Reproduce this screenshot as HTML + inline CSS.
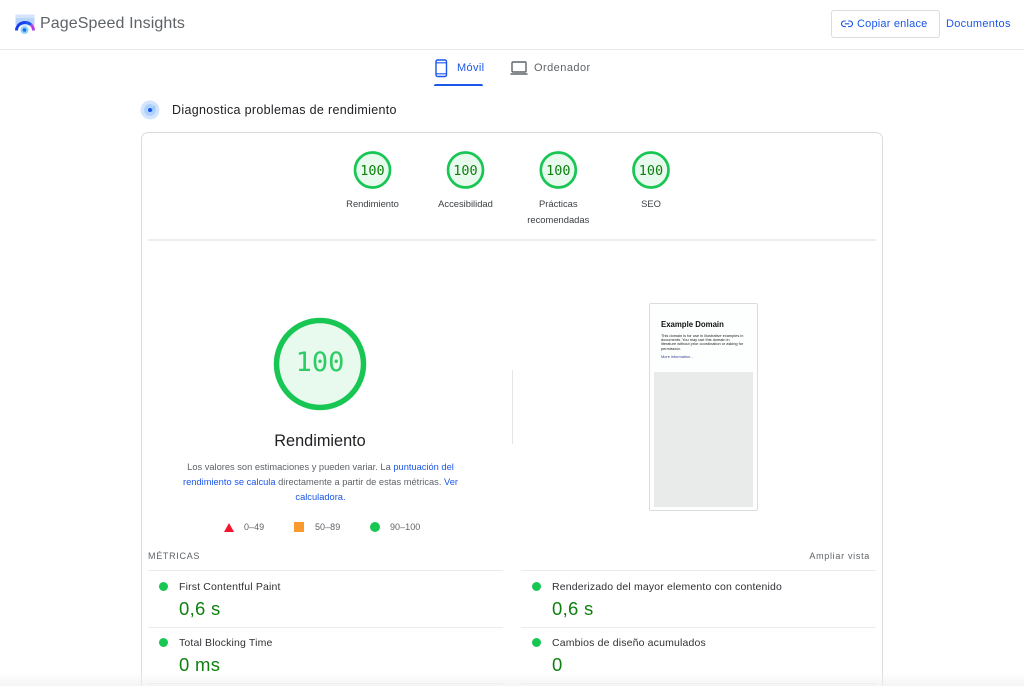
<!DOCTYPE html>
<html lang="es">
<head>
<meta charset="utf-8">
<title>PageSpeed Insights</title>
<style>
html,body{margin:0;padding:0;background:#fff;width:1024px;height:686px;overflow:hidden}
#root{position:relative;width:1024px;height:686px;overflow:hidden;font-family:"Liberation Sans",sans-serif;color:#202124}
.a{position:absolute;white-space:nowrap}
.c{text-align:center;transform:translateX(-50%)}
.line{position:absolute;height:1px;background:#ebebeb}
.mono{font-family:"DejaVu Sans Mono",monospace}
.lab{font-size:9.4px;color:#3c4043;line-height:15.5px}
.leg{font-size:9px;color:#5f6368;letter-spacing:.05px}
.mname{font-size:10.5px;color:#303134;letter-spacing:.16px}
.mval{font-size:18.5px;color:#0f800f;letter-spacing:.3px}
.dot{position:absolute;width:9px;height:9px;border-radius:50%;background:#18c653}
a{color:#1a56e8;text-decoration:none}
</style>
</head>
<body>
<div id="root">
<div class="line" style="left:0;top:49px;width:1024px;height:1px;background:#e8e8e8"></div>

<svg class="a" style="left:14px;top:13px" width="22" height="22" viewBox="0 0 22 22">
<rect x="1.5" y="1.5" width="19" height="11" rx="1" fill="#b8d4fb"/>
<rect x="1.5" y="1.5" width="19" height="3.5" fill="#d4e4fc"/>
<path d="M2.500 17.500a8.500 8 0 0 1 8.500-8" fill="none" stroke="#1a3df0" stroke-width="3"/>
<path d="M11 9.500a8.500 8 0 0 1 6 2.300" fill="none" stroke="#1a55ee" stroke-width="3"/>
<path d="M17 11.800a8.500 8 0 0 1 2.500 5.700" fill="none" stroke="#b23fe8" stroke-width="3"/>
<circle cx="10.500" cy="17" r="4" fill="#8fd0fb"/>
<circle cx="10.500" cy="17" r="1.800" fill="#1a6af0"/>
</svg>
<div class="a" style="left:40px;top:14px;font-size:16px;color:#5f6368;letter-spacing:.1px;line-height:20px">PageSpeed Insights</div>

<div class="a" style="left:831px;top:10px;width:107px;height:26px;border:1px solid #dadce0;border-radius:3px"></div>
<svg class="a" style="left:841px;top:19px" width="12" height="10" viewBox="0 0 12 10">
<path d="M4.800 2H3.300a2.700 2.700 0 0 0 0 5.600h1.500M7.200 2h1.500a2.700 2.700 0 0 1 0 5.600H7.200M3.800 4.800h4.400" fill="none" stroke="#1a56e8" stroke-width="1.100"/>
</svg>
<a class="a" style="left:857px;top:17px;font-size:11px;line-height:14px;letter-spacing:.2px">Copiar enlace</a>
<a class="a" style="left:946px;top:17px;font-size:11px;line-height:14px;letter-spacing:.3px">Documentos</a>

<svg class="a" style="left:434px;top:59px" width="15" height="19" viewBox="0 0 15 19">
<rect x="2" y="1" width="10.500" height="16.500" rx="1.500" fill="none" stroke="#1a56e8" stroke-width="1.400"/>
<path d="M2 3.800h10.500M2 14.800h10.500" stroke="#1a56e8" stroke-width="1.200"/>
</svg>
<a class="a" style="left:457px;top:61px;font-size:11px;line-height:14px;letter-spacing:.35px">Móvil</a>
<div class="a" style="left:434px;top:84px;width:49px;height:2px;background:#1a56e8;border-radius:2px 2px 0 0"></div>
<svg class="a" style="left:510px;top:60px" width="18" height="16" viewBox="0 0 18 16">
<rect x="2" y="2" width="14" height="10" rx="1" fill="none" stroke="#5f6368" stroke-width="1.400"/>
<path d="M.5 14h17" stroke="#5f6368" stroke-width="1.400"/>
</svg>
<div class="a" style="left:534px;top:61px;font-size:11px;line-height:14px;letter-spacing:.45px;color:#5f6368">Ordenador</div>

<svg class="a" style="left:140px;top:100px" width="20" height="20" viewBox="0 0 20 20">
<circle cx="10" cy="10" r="9.500" fill="#d3e5fd"/>
<circle cx="10" cy="10" r="6" fill="#aed2fb"/>
<path d="M10 10l6-5-3.500 7z" fill="#8ec2fa"/>
<circle cx="10" cy="10" r="2" fill="#1a56e8"/>
</svg>
<div class="a" style="left:172px;top:102px;font-size:12.5px;line-height:17px;color:#202124;letter-spacing:.32px">Diagnostica problemas de rendimiento</div>

<div class="a" style="left:141px;top:132px;width:740px;height:553px;border:1px solid #dadce0;border-bottom:0;border-radius:7px 7px 0 0"></div>

<svg class="a" style="left:340px;top:140px" width="340" height="60" viewBox="340 140 340 60">
<g fill="#e8f9ee" stroke="#18c653" stroke-width="2.700">
<circle cx="372.500" cy="170" r="17.500"/>
<circle cx="465.500" cy="170" r="17.500"/>
<circle cx="558.300" cy="170" r="17.500"/>
<circle cx="651" cy="170" r="17.500"/>
</g>
</svg>
<div class="a c mono" style="left:372.500px;top:162px;font-size:13.500px;line-height:18px;color:#0f800f">100</div>
<div class="a c mono" style="left:465.500px;top:162px;font-size:13.500px;line-height:18px;color:#0f800f">100</div>
<div class="a c mono" style="left:558.300px;top:162px;font-size:13.500px;line-height:18px;color:#0f800f">100</div>
<div class="a c mono" style="left:651px;top:162px;font-size:13.500px;line-height:18px;color:#0f800f">100</div>

<div class="a c lab" style="left:372.500px;top:196px">Rendimiento</div>
<div class="a c lab" style="left:465.500px;top:196px">Accesibilidad</div>
<div class="a c lab" style="left:558.300px;top:196px">Prácticas<br>recomendadas</div>
<div class="a c lab" style="left:651px;top:196px">SEO</div>

<div class="line" style="left:148px;top:239px;width:728px;height:2px;background:#eeeeee"></div>

<svg class="a" style="left:270px;top:314px" width="100" height="100" viewBox="0 0 100 100">
<circle cx="50" cy="50" r="43.500" fill="#e8f9ee" stroke="#18c653" stroke-width="5.500"/>
</svg>
<div class="a c mono" style="left:320px;top:346px;font-size:27px;line-height:34px;color:#2dcc64">100</div>
<div class="a c" style="left:320px;top:431px;font-size:16.300px;line-height:20px;color:#202124">Rendimiento</div>
<div class="a c" style="left:320.500px;top:460px;font-size:9.300px;line-height:15px;color:#5f6368;text-align:center">Los valores son estimaciones y pueden variar. La <a>puntuación del</a><br><a>rendimiento se calcula</a> directamente a partir de estas métricas. <a>Ver</a><br><a>calculadora.</a></div>

<svg class="a" style="left:224px;top:523px" width="10" height="9" viewBox="0 0 10 9"><path d="M5 0l5 9H0z" fill="#f5142b"/></svg>
<div class="a leg" style="left:244px;top:522px;line-height:11px">0–49</div>
<div class="a" style="left:294px;top:522px;width:10px;height:10px;background:#fb9a2c"></div>
<div class="a leg" style="left:315px;top:522px;line-height:11px">50–89</div>
<div class="a" style="left:370px;top:522px;width:10px;height:10px;border-radius:50%;background:#18c653"></div>
<div class="a leg" style="left:390px;top:522px;line-height:11px">90–100</div>

<div class="a" style="left:512px;top:370px;width:1px;height:74px;background:#e4e6e6"></div>

<div class="a" style="left:649px;top:303px;width:107px;height:206px;border:1px solid #dadce0;border-radius:2px;background:#fdfefe"></div>
<div class="a" style="left:654px;top:372px;width:99px;height:135px;background:#e9ebea"></div>
<div class="a" style="left:661px;top:319.500px;font-size:7.800px;line-height:10px;font-weight:bold;color:#111">Example Domain</div>
<div class="a" style="left:661px;top:333.500px;font-size:3.900px;line-height:4.400px;color:#222">This domain is for use in illustrative examples in<br>documents. You may use this domain in<br>literature without prior coordination or asking for<br>permission.</div>
<div class="a" style="left:661px;top:354.500px;font-size:3.900px;line-height:4.400px;color:#3a3f8f">More information...</div>

<div class="a" style="left:148px;top:551px;font-size:9px;line-height:11px;color:#5f6368;letter-spacing:.7px">MÉTRICAS</div>
<div class="a" style="right:154px;top:551px;font-size:9px;line-height:11px;color:#5f6368;letter-spacing:.7px">Ampliar vista</div>

<div class="line" style="left:148px;top:570px;width:355px"></div>
<div class="line" style="left:521px;top:570px;width:355px"></div>
<div class="dot" style="left:159px;top:582px"></div>
<div class="a mname" style="left:179px;top:580px;line-height:14px">First Contentful Paint</div>
<div class="a mval" style="left:179px;top:597px;line-height:23px">0,6 s</div>
<div class="dot" style="left:532px;top:582px"></div>
<div class="a mname" style="left:552px;top:580px;line-height:14px">Renderizado del mayor elemento con contenido</div>
<div class="a mval" style="left:552px;top:597px;line-height:23px">0,6 s</div>

<div class="line" style="left:148px;top:627px;width:355px"></div>
<div class="line" style="left:521px;top:627px;width:355px"></div>
<div class="dot" style="left:159px;top:638px"></div>
<div class="a mname" style="left:179px;top:636px;line-height:14px">Total Blocking Time</div>
<div class="a mval" style="left:179px;top:653px;line-height:23px">0 ms</div>
<div class="dot" style="left:532px;top:638px"></div>
<div class="a mname" style="left:552px;top:636px;line-height:14px">Cambios de diseño acumulados</div>
<div class="a mval" style="left:552px;top:653px;line-height:23px">0</div>

<div class="line" style="left:148px;top:683px;width:355px"></div>
<div class="line" style="left:521px;top:683px;width:355px"></div>
<div class="a" style="left:0;top:672px;width:1024px;height:14px;background:linear-gradient(to bottom,rgba(240,240,240,0),rgba(240,240,240,.7))"></div>
</div>
</body>
</html>
